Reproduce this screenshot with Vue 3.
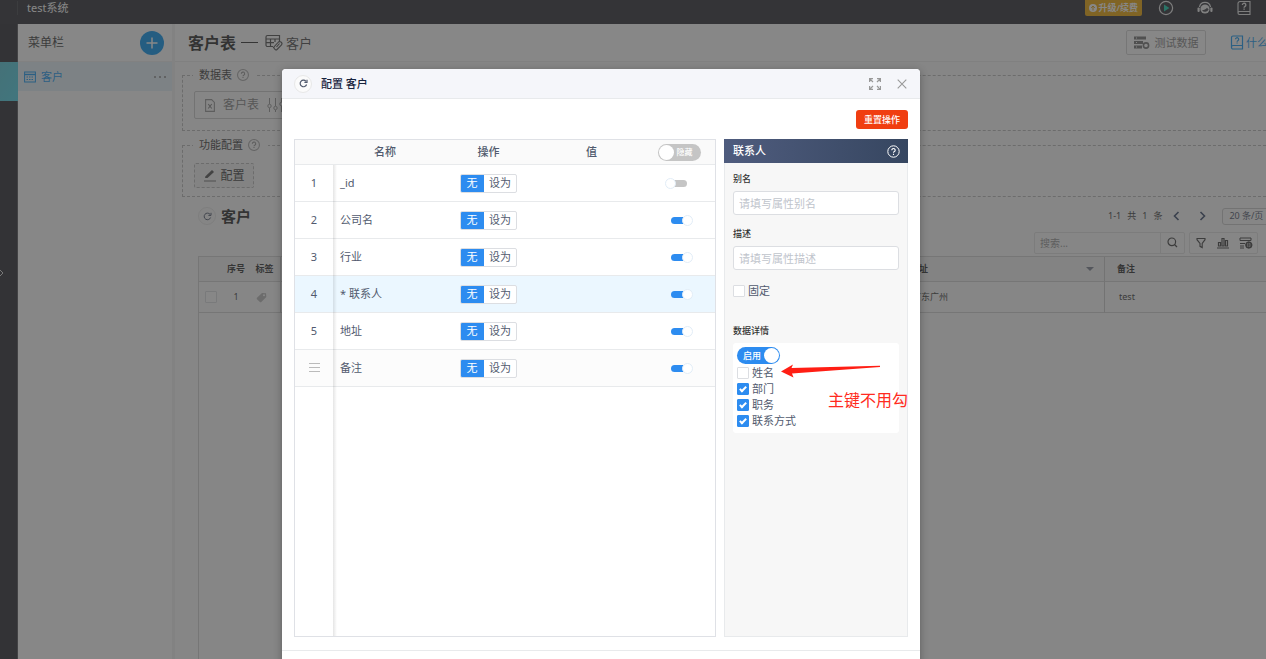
<script setup>
import { reactive, ref } from 'vue'

const fields = reactive([
  { index: '1', name: '_id', on: false },
  { index: '2', name: '公司名', on: true },
  { index: '3', name: '行业', on: true },
  { index: '4', name: '* 联系人', on: true, active: true },
  { index: '5', name: '地址', on: true },
  { index: '', name: '备注', on: true, drag: true },
])
const details = reactive([
  { name: '姓名', on: false },
  { name: '部门', on: true },
  { name: '职务', on: true },
  { name: '联系方式', on: true },
])
const hideAll = ref(false)
const enabled = ref(true)
const fixed = ref(false)
</script>

<template>
  <div class="page">
    <header class="topbar">
      <i class="topbar-rail"></i>
      <span class="sys">test系统</span>
      <button class="upgrade">
        <svg width="8" height="8" viewBox="0 0 8 8"><circle cx="4" cy="4" r="4" fill="#fff" /><path d="M4 6.5V2M2.2 3.8L4 2l1.8 1.8" stroke="#e0a010" fill="none" /></svg>
        升级/续费
      </button>
      <button class="top-icon" aria-label="播放">
        <svg width="16" height="16" viewBox="0 0 16 16"><circle cx="8" cy="8" r="6.6" fill="none" stroke="#e8e8e8" stroke-width="1.2" /><path d="M6 4.4v7.2L11.400 8z" fill="#19d0b0" /></svg>
      </button>
      <button class="top-icon" aria-label="客服">
        <svg width="16" height="16" viewBox="0 0 16 16"><path d="M2.500 7A5.600 5.600 0 0 1 13.500 7" fill="none" stroke="#eee" stroke-width="1.200" /><circle cx="8" cy="9" r="4.600" fill="#eee" /><path d="M5 10.200C7 10 9 9.200 10 7.800L11.600 9.400a3.800 3.800 0 0 1-6.600.8" fill="#44454b" /><rect x="0.500" y="7.500" width="2.200" height="4.500" rx="1" fill="#eee" /><rect x="13.300" y="7.500" width="2.200" height="4.500" rx="1" fill="#eee" /></svg>
      </button>
      <button class="top-icon" aria-label="帮助">
        <svg width="16" height="16" viewBox="0 0 16 16"><path d="M14 11.500V1.500H4a2 2 0 0 0-2 2V13a1.500 1.500 0 0 0 1.500 1.500H14v-3H3.500A1.500 1.500 0 0 0 2 13" fill="none" stroke="#e8e8e8" stroke-width="1.100" /><path d="M6.400 5a1.700 1.700 0 1 1 2.600 1.400c-.6.4-.9.6-.9 1.300M8.100 8.500v1.200" fill="none" stroke="#e8e8e8" stroke-width="1.400" /></svg>
      </button>
    </header>

    <div class="body">
      <nav class="rail">
        <i class="rail-active"></i>
        <svg class="rail-arrow" width="4" height="8" viewBox="0 0 4 8"><path d="M0 1l3 3-3 3" fill="none" stroke="#ddd" /></svg>
      </nav>
      <aside class="sidebar">
        <div class="side-head">
          <span>菜单栏</span>
          <button class="add" aria-label="新增">
            <svg width="24" height="24" viewBox="0 0 24 24"><path d="M12 6.500v11M6.500 12h11" stroke="#fff" stroke-width="1.500" /></svg>
          </button>
        </div>
        <a class="side-item" href="#">
          <svg width="12" height="12" viewBox="0 0 12 12"><rect x=".6" y="1" width="10.800" height="10" fill="none" stroke="#199bf5" /><path d="M.6 3.500h10.800" stroke="#199bf5" stroke-width="1.400" /><path d="M2.500 6h7M2.500 8.500h7" stroke="#199bf5" stroke-dasharray="1.500 1" /></svg>
          <span>客户</span>
          <b class="dots"><i></i><i></i><i></i></b>
        </a>
      </aside>

      <main class="main">
        <div class="main-head">
          <h1>客户表</h1>
          <i class="dash"></i>
          <svg width="18" height="17" viewBox="0 0 18 17"><path d="M8 12.500H2.500a1.500 1.500 0 0 1-1.500-1.500V3a1.500 1.500 0 0 1 1.500-1.500h12V7M1 5h13.500M1 8.700h8M5.500 5v7.500M10 5v3" fill="none" stroke="#515151" stroke-width="1.200" /><path d="M9.500 14.500l-1-1 4.500-5a2 2 0 0 1 3.500 2.500l-4.500 4.500a1.500 1.500 0 0 1-2.500-1M11.500 13l3-3.500" fill="none" stroke="#515151" stroke-width="1.100" /></svg>
          <span class="crumb">客户</span>
          <div class="head-right">
            <button class="test-data">
              <svg width="16" height="14" viewBox="0 0 16 14"><path d="M0 2h12M0 6.500h9M0 11h8" stroke="#777" stroke-width="3" /><path d="M2 2h1M2 6.500h1M2 11h1" stroke="#fff" /><circle cx="12" cy="9.500" r="2.600" fill="#fff" stroke="#777" stroke-width="1.600" /></svg>
              测试数据
            </button>
            <a class="what" href="#">
              <svg width="14" height="15" viewBox="0 0 14 15"><path d="M12.500 10.500V1H3a1.500 1.500 0 0 0-1.500 1.500v10A1.500 1.500 0 0 0 3 14h9.500v-3.500H3A1.500 1.500 0 0 0 1.500 12" fill="none" stroke="#199bf5" stroke-width="1.200" /><path d="M5.500 4.300a1.600 1.600 0 1 1 2.400 1.400c-.6.4-.8.5-.8 1.100M7.100 7.600v1" fill="none" stroke="#199bf5" stroke-width="1.200" /></svg>
              什么
            </a>
          </div>
        </div>

        <div class="content">
          <fieldset class="group sources">
            <legend>数据表 <svg width="12" height="12" viewBox="0 0 11 11"><circle cx="5.500" cy="5.500" r="5" fill="none" stroke="#aaa" /><path d="M4 4.400a1.500 1.500 0 1 1 2.300 1.200c-.6.4-.8.5-.8 1M5.500 7.400v.9" fill="none" stroke="#999" /></svg></legend>
            <button class="source">
              <svg width="10" height="13" viewBox="0 0 10 13"><path d="M.6.600h6l2.800 2.800v9H.6z" fill="none" stroke="#999" stroke-width="1.100" /><path d="M3.200 5l3.600 4.500M6.800 5L3.200 9.500" stroke="#888" stroke-width="1.100" /></svg>
              客户表
              <svg width="18" height="14" viewBox="0 0 18 14"><path d="M2.500 0v6M2.500 10v4M8.500 0v8M8.500 12v2M14.500 0v4M14.500 8v6" stroke="#999" /><circle cx="2.500" cy="8" r="1.700" fill="none" stroke="#999" /><circle cx="8.500" cy="10" r="1.700" fill="none" stroke="#999" /><circle cx="14.500" cy="6" r="1.700" fill="none" stroke="#999" /></svg>
            </button>
          </fieldset>
          <fieldset class="group">
            <legend>功能配置 <svg width="12" height="12" viewBox="0 0 11 11"><circle cx="5.500" cy="5.500" r="5" fill="none" stroke="#aaa" /><path d="M4 4.400a1.500 1.500 0 1 1 2.300 1.200c-.6.4-.8.5-.8 1M5.500 7.400v.9" fill="none" stroke="#999" /></svg></legend>
            <button class="config">
              <svg width="14" height="13" viewBox="0 0 14 13"><path d="M2 9L2.500 7.200 9 1l2 2-6.500 6z" fill="#555" /><path d="M1 12h12" stroke="#777" /></svg>
              配置
            </button>
          </fieldset>

          <div class="list-head">
            <button class="refresh" aria-label="刷新"><svg width="9" height="9" viewBox="0 0 9 9"><path d="M7.600 5.500A3.300 3.300 0 1 1 7 2.300" fill="none" stroke="#515a6e" /><path d="M8 .8v2.600H5.400" fill="none" stroke="#515a6e" /></svg></button>
            <h2>客户</h2>
            <div class="pager">
              <span>1-1</span><span>共</span><span>1</span><span>条</span>
              <button aria-label="上一页"><svg width="7" height="10" viewBox="0 0 7 10"><path d="M5.500 1l-4 4 4 4" fill="none" stroke="#405070" stroke-width="1.600" /></svg></button>
              <button aria-label="下一页"><svg width="7" height="10" viewBox="0 0 7 10"><path d="M1.500 1l4 4-4 4" fill="none" stroke="#405070" stroke-width="1.600" /></svg></button>
              <button class="size">20 条/页</button>
            </div>
          </div>
          <div class="tools">
            <div class="search">
              <input type="search" placeholder="搜索..." aria-label="搜索" />
              <button aria-label="查询"><svg width="11" height="11" viewBox="0 0 11 11"><circle cx="4.800" cy="4.800" r="3.800" fill="none" stroke="#444" stroke-width="1.200" /><path d="M7.500 7.500L10 10" stroke="#444" stroke-width="1.200" /></svg></button>
            </div>
            <div class="tool-group">
              <button aria-label="筛选"><svg width="12" height="12" viewBox="0 0 12 12"><path d="M2 1.500h8v1.200L7.200 6.500v4L5 9.300V6.500L2 2.700z" fill="none" stroke="#444" stroke-width="1.100" /></svg></button>
              <button aria-label="图表"><svg width="12" height="12" viewBox="0 0 12 12"><path d="M0 11h12M1.500 5.500h2V9h-2zM5 1.500h2V9H5zM8.500 3.500h2V9h-2z" fill="none" stroke="#444" stroke-width="1.200" /></svg></button>
              <button aria-label="列设置"><svg width="14" height="12" viewBox="0 0 14 12"><path d="M1 1h11v2.500H1zM1 6.500h5M1 9h4M1 11h4" fill="none" stroke="#444" /><circle cx="9.800" cy="8" r="2.700" fill="none" stroke="#444" stroke-width="1.600" /><path d="M9.800 4.500v7M6.300 8h7" stroke="#444" /></svg></button>
            </div>
          </div>
          <div class="grid">
            <table>
              <colgroup><col class="g1" /><col class="g2" /><col class="g3" /><col class="g4" /><col class="g5" /><col /></colgroup>
              <thead><tr><th></th><th>序号</th><th>标签</th><th></th><th class="left arrow">地址</th><th class="left">备注</th></tr></thead>
              <tbody><tr>
                <td><input class="check" type="checkbox" aria-label="选择" /></td>
                <td>1</td>
                <td class="tag"><svg width="11" height="11" viewBox="0 0 11 11"><path d="M6 1l4 .2.300 3.800-5 5a1 1 0 0 1-1.400 0L1 7.200a1 1 0 0 1 0-1.400z" fill="#bbb" /><circle cx="8" cy="3.200" r="1" fill="#fff" /></svg></td>
                <td></td><td class="left">广东广州</td><td class="left">test</td>
              </tr></tbody>
            </table>
          </div>
        </div>
      </main>
    </div>

    <div class="mask">
      <section class="modal" role="dialog" aria-labelledby="dlg-title">
        <header class="modal-head">
          <button class="refresh" aria-label="刷新"><svg width="9" height="9" viewBox="0 0 9 9"><path d="M7.600 5.500A3.300 3.300 0 1 1 7 2.300" fill="none" stroke="#515a6e" stroke-width="1.200" /><path d="M8 .8v2.600H5.400" fill="none" stroke="#515a6e" stroke-width="1.200" /></svg></button>
          <h3 id="dlg-title">配置 客户</h3>
          <button class="plain" aria-label="全屏"><svg width="12" height="12" viewBox="0 0 12 12"><path d="M.6 4V.6H4M.6.600L4 4M8 .6h3.400V4M11.400.600L8 4M.6 8v3.400H4M.6 11.400L4 8M8 11.400h3.400V8M11.400 11.400L8 8" fill="none" stroke="#999" stroke-width="1.300" /></svg></button>
          <button class="plain" aria-label="关闭"><svg width="10" height="10" viewBox="0 0 10 10"><path d="M.7.700l8.600 8.600M9.300.700L.7 9.300" stroke="#999" stroke-width="1.100" /></svg></button>
        </header>

        <div class="modal-body">
          <button class="reset">重置操作</button>
          <div class="split">
            <div class="fields">
              <table>
                <colgroup><col class="c1" /><col class="c2" /><col class="c3" /><col class="c3" /><col /></colgroup>
                <thead>
                  <tr>
                    <th></th><th>名称</th><th>操作</th><th>值</th>
                    <th><label class="switch"><input v-model="hideAll" type="checkbox" /><span>隐藏</span></label></th>
                  </tr>
                </thead>
                <tbody>
                  <tr v-for="f in fields" :key="f.name" :class="{ active: f.active, drag: f.drag }">
                    <td>
                      <svg v-if="f.drag" width="11" height="10" viewBox="0 0 11 10"><path d="M0 .5h11M0 4.500h11M0 8.500h11" stroke="#bbb" /></svg>
                      <template v-else>{{ f.index }}</template>
                    </td>
                    <td class="name">{{ f.name }}</td>
                    <td><div class="seg"><button class="sel">无</button><button>设为</button></div></td>
                    <td></td>
                    <td><input v-model="f.on" class="mini" type="checkbox" :aria-label="f.name" /></td>
                  </tr>
                </tbody>
              </table>
            </div>

            <div class="panel">
              <div class="panel-head">
                <span>联系人</span>
                <svg width="13" height="13" viewBox="0 0 13 13"><circle cx="6.500" cy="6.500" r="5.700" fill="none" stroke="#fff" /><path d="M4.800 5.200a1.700 1.700 0 1 1 2.600 1.400c-.7.4-.9.600-.9 1.200M6.500 8.800v1.100" fill="none" stroke="#fff" stroke-width="1.100" /></svg>
              </div>
              <div class="panel-body">
                <label class="lab" for="alias">别名</label>
                <input id="alias" class="text" type="text" placeholder="请填写属性别名" />
                <label class="lab" for="desc">描述</label>
                <input id="desc" class="text" type="text" placeholder="请填写属性描述" />
                <label class="opt pin"><input v-model="fixed" class="check" type="checkbox" />固定</label>
                <div class="lab">数据详情</div>
                <div class="detail">
                  <label class="switch on"><span>启用</span><input v-model="enabled" type="checkbox" /></label>
                  <label v-for="d in details" :key="d.name" class="opt"><input v-model="d.on" class="check" type="checkbox" />{{ d.name }}</label>
                  <svg class="pointer" width="100" height="14" viewBox="0 0 100 14"><path d="M0 7.500L12 .5l-1.500 3.500L99 1.700v1.300L11 9.500l1.500 4z" fill="#ff1e14" /></svg>
                  <span class="note">主键不用勾</span>
                </div>
              </div>
            </div>
          </div>
        </div>
        <footer class="modal-foot"></footer>
      </section>
    </div>
  </div>
</template>

<style>
html, body { margin: 0; overflow: hidden; }
</style>

<style scoped>
.page, .page * { box-sizing: border-box; }
.page {
  position: relative; height: 100vh; overflow: hidden; display: flex; flex-direction: column;
  font-family: "Noto Sans", "Noto Sans CJK SC", sans-serif; font-size: 11px; line-height: 16px; color: #515a6e; background: #fff;
}
button { font: inherit; color: inherit; margin: 0; padding: 0; border: 0; background: none; display: inline-flex; align-items: center; justify-content: center; white-space: nowrap; }
svg { display: block; flex: none; }
h1, h2, h3 { margin: 0; }
a { text-decoration: none; }
input { font: inherit; margin: 0; }
table { border-collapse: separate; border-spacing: 0; table-layout: fixed; }
th, td { padding: 0; }

.topbar { flex: none; height: 24px; padding: 0 14px 8px 0; display: flex; align-items: center; background: #303138; color: #fff; }
.topbar-rail { width: 18px; height: 14px; border-right: 1px solid #45464c; }
.sys { flex: 1; padding-left: 9px; color: #fff; }
.upgrade { height: 16px; padding: 0 4px; gap: 1px; border-radius: 0 0 2px 2px; background: #eda80c; font-size: 9px; font-weight: 600; margin-right: 16px; }
.top-icon { margin-right: 23px; }
.top-icon:last-child { margin-right: 0; }

.body { flex: 1; display: flex; min-height: 0; }
.rail { position: relative; flex: none; width: 18px; background: #2e2f35; padding-top: 38px; border-right: 1px solid #55565b; }
.rail-active { display: block; height: 39px; margin-right: -1px; background: linear-gradient(120deg, #58c8d8, #52d4e8); }
.rail-arrow { position: absolute; left: 0; top: 245px; }
.sidebar { flex: none; width: 154px; }
.side-head { height: 38px; padding: 0 8px 0 10px; display: flex; align-items: center; justify-content: space-between; font-size: 12px; color: #444; border-bottom: 1px solid #f0f0f0; }
.add { width: 24px; height: 24px; border-radius: 50%; background: #0c96f0; }
.side-item { height: 29px; padding: 0 6px; display: flex; align-items: center; gap: 5px; background: #e6f3fb; color: #199bf5; font-size: 11px; }
.dots { margin-left: auto; display: flex; gap: 3px; }
.dots i { width: 2px; height: 2px; background: #888; border-radius: 50%; }

.main { flex: 1; min-width: 0; display: flex; flex-direction: column; border-left: 3px solid #f2f2f2; background: #fcfcfc; }
.main-head { flex: none; height: 38px; padding-left: 13px; display: flex; align-items: center; background: #fff; border-bottom: 1px solid #eee; }
h1 { font-size: 16px; line-height: 20px; color: #2e2e2e; }
.dash { width: 17px; height: 1px; margin: 0 7px 0 5px; background: #333; }
.crumb { margin-left: 3px; font-size: 13px; color: #515151; }
.head-right { margin-left: auto; width: 140px; display: flex; align-items: center; gap: 24px; overflow: hidden; }
.test-data { flex: none; width: 80px; height: 25px; gap: 5px; border: 1px solid #d4d4d4; border-radius: 2px; color: #888; }
.what { flex: none; display: flex; align-items: center; gap: 2px; color: #199bf5; }

.content { flex: 1; min-height: 0; display: flex; flex-direction: column; padding: 5px 0 0 7px; }
.group { min-width: 0; height: 60px; margin: 0 0 6px; padding: 10px 11px 0; border: 1px dashed #bbb; border-right: 0; flex: none; }
.sources { height: 64px; padding-top: 8px; }
legend { display: flex; align-items: center; gap: 5px; padding: 0 8px 0 6px; margin-left: -1px; color: #444; height: 16px; }
.source { width: 140px; height: 28px; gap: 8px; border: 1px solid #ccc; border-radius: 2px; font-size: 12px; color: #888; justify-content: flex-start; padding-left: 10px; }
.config { height: 25px; width: 60px; gap: 3px; border: 1px dashed #bbb; border-radius: 2px; font-size: 12px; color: #444; background: #f4f4f4; }

.list-head { display: flex; align-items: center; padding-left: 16px; height: 26px; flex: none; }
.refresh { width: 18px; height: 18px; border: 1px solid #e8e8e8; border-radius: 50%; background: #fbfbfb; }
.list-head h2 { margin-left: 5px; font-size: 15px; color: #2e2e2e; }
.pager { margin-left: auto; display: flex; align-items: center; width: 158px; gap: 6px; font-size: 9px; overflow: hidden; }
.pager span { flex: none; color: #444; }
.pager button { flex: none; margin: 0 8px 0 5px; }
.pager button:nth-of-type(2) { margin-right: 10px; }
.pager .size { width: 60px; height: 17px; margin: 0; border: 1px solid #ccc; border-radius: 3px; justify-content: flex-start; padding-left: 6px; }
.tools { display: flex; justify-content: flex-end; gap: 4px; padding-right: 8px; height: 27px; flex: none; align-items: center; }
.search { display: flex; width: 151px; height: 22px; border: 1px solid #e4e4e4; border-radius: 2px; }
.search input { flex: 1; min-width: 0; border: 0; padding: 0 5px; background: none; font-size: 10px; outline: 0; }
.search input::placeholder { color: #999; }
.search button { width: 24px; border-left: 1px solid #e4e4e4; }
.tool-group { display: flex; width: 69px; height: 22px; border: 1px solid #e4e4e4; border-radius: 2px; }
.tool-group button { flex: 1; }
.grid { flex: 1; margin-left: 16px; border: 1px solid #d4d4d4; border-width: 1px 0 0 1px; }
.grid table { width: 100%; font-size: 9px; text-align: center; }
.g1 { width: 24px; } .g2 { width: 26px; } .g3 { width: 32px; } .g4 { width: 617px; } .g5 { width: 207px; }
.grid th { height: 25px; color: #333; font-weight: 600; background: #f5f5f5; border-bottom: 1px solid #d4d4d4; }
.grid td { height: 31px; color: #444; border-bottom: 1px solid #d4d4d4; }
.grid td svg, .grid td input { margin: 0 auto; }
.grid .tag { padding-right: 6px; }
.grid .left { text-align: left; padding-left: 12px; }
.grid td.left { padding-left: 14px; }
.grid th:nth-child(3), .grid td:nth-child(3), .grid th:nth-child(5), .grid td:nth-child(5) { border-right: 1px solid #ccc; }
.grid .arrow::after { content: ""; float: right; margin: 6px 10px 0 0; border: 4px solid transparent; border-top-color: #808695; border-bottom: 0; }

.check { appearance: none; display: flex; justify-content: center; flex: none; width: 12px; height: 12px; border: 1px solid #dcdee2; border-radius: 1px; background: #fff; }
.check:checked { background: #2d8cf0; border-color: #2d8cf0; }
.check:checked::before { content: ""; box-sizing: border-box; width: 4px; height: 7px; margin-top: 1px; border: solid #fff; border-width: 0 2px 2px 0; transform: rotate(45deg); }

.mask { position: absolute; inset: 0; display: flex; justify-content: center; align-items: flex-start; padding: 69px 64px 0 0; background: rgba(55, 55, 55, .6); overflow: hidden; }
.modal { width: 638px; flex: none; border-radius: 4px 4px 0 0; background: #fff; box-shadow: 0 2px 8px rgba(0, 0, 0, .3); }
.modal-head { display: flex; align-items: center; height: 30px; padding: 0 13px 0 12px; background: #f5f6fa; border-bottom: 1px solid #e8eaec; border-radius: 4px 4px 0 0; }
h3 { flex: 1; margin-left: 9px; font-size: 11px; font-weight: 500; color: #17233d; }
.plain { margin-left: 16px; }
.modal-body { display: flex; flex-direction: column; padding: 11px 12px 13px; }
.reset { align-self: flex-end; width: 52px; height: 19px; margin-bottom: 10px; border-radius: 3px; background: #f03e11; color: #fff; font-size: 9px; font-weight: 500; }
.split { display: flex; gap: 8px; height: 498px; }
.fields { position: relative; flex: 1; min-width: 0; border: 1px solid #dfe1e6; }
.fields::after { content: ""; position: absolute; left: 38px; top: 25px; bottom: 0; width: 4px; background: linear-gradient(90deg, rgba(0, 0, 0, .1), rgba(0, 0, 0, 0)); }
.fields table { width: 100%; text-align: center; }
.c1 { width: 38px; } .c2 { width: 104px; } .c3 { width: 103px; }
.fields th { height: 25px; background: #fafafa; border-bottom: 1px solid #e8eaec; font-weight: 500; }
.fields td { height: 37px; border-bottom: 1px solid #e8eaec; }
.active td { background: #ebf7ff; }
.drag td { background: #fcfcfc; }
.drag svg { margin: 0 auto; }
.fields .name { text-align: left; padding-left: 7px; }
.seg { display: inline-flex; vertical-align: middle; height: 19px; border: 1px solid #dcdee2; border-radius: 2px; background: #fff; overflow: hidden; }
.seg button { width: 32px; }
.seg .sel { width: 24px; margin: -1px 0 -1px -1px; background: #2d8cf0; color: #fff; }

.switch { display: inline-flex; vertical-align: middle; align-items: center; justify-content: space-between; width: 43px; height: 17px; padding: 0 8px 0 1px; border-radius: 9px; background: #c5c5c5; color: #fff; font-size: 8px; }
.switch input { appearance: none; width: 15px; height: 15px; border-radius: 50%; background: #fff; }
.switch.on { padding: 0 1px 0 6px; background: #2d8cf0; font-size: 9px; font-weight: 500; }
.mini { appearance: none; position: relative; display: block; width: 16px; height: 7px; margin: 0 auto; border-radius: 4px; background: #c5c5c5; }
.mini::before { content: ""; position: absolute; box-sizing: border-box; left: -6px; top: -2px; width: 11px; height: 11px; border: 1px solid #e2edf7; border-radius: 50%; background: #fff; }
.mini:checked { background: #2d8cf0; }
.mini:checked::before { left: 11px; }

.panel { flex: none; width: 184px; display: flex; flex-direction: column; border: 1px solid #e8eaec; background: #f7f7f7; }
.panel-head { display: flex; align-items: center; justify-content: space-between; height: 24px; margin: -1px -1px 0; padding: 0 8px 0 9px; background: linear-gradient(90deg, #4f5c7e, #364660); color: #fff; font-weight: 500; }
.panel-body { display: flex; flex-direction: column; padding: 10px 8px; }
.lab { font-size: 9px; line-height: 12px; font-weight: 500; color: #333; margin-bottom: 6px; }
.text { width: 100%; height: 24px; margin-bottom: 13px; padding: 0 5px; border: 1px solid #dcdee2; border-radius: 3px; background: #fff; outline: 0; }
.text::placeholder { color: #c0c4cc; }
.opt { display: flex; align-items: center; gap: 3px; height: 16px; }
.pin { margin-bottom: 26px; }
.detail { position: relative; display: flex; flex-direction: column; align-items: flex-start; height: 90px; padding: 4px; border-radius: 3px; background: #fff; }
.detail .switch { margin-bottom: 1px; }
.pointer { position: absolute; left: 48px; top: 21px; }
.note { position: absolute; left: 95px; top: 46px; font-size: 16px; line-height: 22px; color: #ff2a20; white-space: nowrap; }
.modal-foot { height: 44px; border-top: 1px solid #e8eaec; }
</style>
